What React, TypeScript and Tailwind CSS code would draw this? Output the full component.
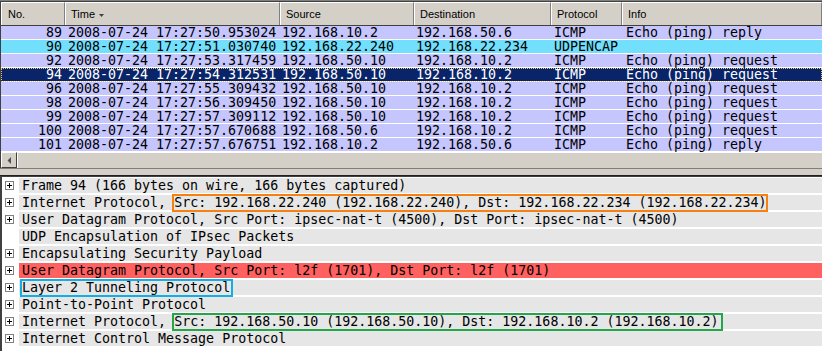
import React from "react";

type Kind = "icmp" | "udp" | "sel";
type Pkt = { no: string; time: string; src: string; dst: string; proto: string; info: string; kind: Kind };

const pkts: Pkt[] = [
  { no: "89", time: "2008-07-24 17:27:50.953024", src: "192.168.10.2", dst: "192.168.50.6", proto: "ICMP", info: "Echo (ping) reply", kind: "icmp" },
  { no: "90", time: "2008-07-24 17:27:51.030740", src: "192.168.22.240", dst: "192.168.22.234", proto: "UDPENCAP", info: "", kind: "udp" },
  { no: "92", time: "2008-07-24 17:27:53.317459", src: "192.168.50.10", dst: "192.168.10.2", proto: "ICMP", info: "Echo (ping) request", kind: "icmp" },
  { no: "94", time: "2008-07-24 17:27:54.312531", src: "192.168.50.10", dst: "192.168.10.2", proto: "ICMP", info: "Echo (ping) request", kind: "sel" },
  { no: "96", time: "2008-07-24 17:27:55.309432", src: "192.168.50.10", dst: "192.168.10.2", proto: "ICMP", info: "Echo (ping) request", kind: "icmp" },
  { no: "98", time: "2008-07-24 17:27:56.309450", src: "192.168.50.10", dst: "192.168.10.2", proto: "ICMP", info: "Echo (ping) request", kind: "icmp" },
  { no: "99", time: "2008-07-24 17:27:57.309112", src: "192.168.50.10", dst: "192.168.10.2", proto: "ICMP", info: "Echo (ping) request", kind: "icmp" },
  { no: "100", time: "2008-07-24 17:27:57.670688", src: "192.168.50.6", dst: "192.168.10.2", proto: "ICMP", info: "Echo (ping) request", kind: "icmp" },
  { no: "101", time: "2008-07-24 17:27:57.676751", src: "192.168.10.2", dst: "192.168.50.6", proto: "ICMP", info: "Echo (ping) reply", kind: "icmp" },
];

const rowCls: Record<Kind, string> = {
  icmp: "bg-[#c6c6ff] text-black",
  udp: "bg-[#72e0fc] text-black",
  sel: "bg-[#0a246a] text-white outline outline-1 outline-dotted outline-[#e8c878] -outline-offset-1",
};

const GRID = "grid grid-cols-[64px_215px_134px_137px_71px_1fr]";

function HeaderCell({ children }: { children: React.ReactNode }) {
  return (
    <div className="h-[23px] flex items-center border-t border-t-white border-l border-l-white border-r border-r-[#808080] pl-[5px] text-[11px] text-black font-['Liberation_Sans',Arial,sans-serif] whitespace-nowrap overflow-hidden">
      {children}
    </div>
  );
}

function Plus() {
  return (
    <div className="w-[9px] h-[9px] border border-[#808080] bg-white flex items-center justify-center">
      <svg width="7" height="7" viewBox="0 0 7 7">
        <rect x="1" y="3" width="5" height="1" fill="#000" />
        <rect x="3" y="1" width="1" height="5" fill="#000" />
      </svg>
    </div>
  );
}

function DetailRow({ plus = true, red = false, children }: { plus?: boolean; red?: boolean; children: React.ReactNode }) {
  return (
    <div className="h-[17px] flex items-start">
      <div className="w-[17px] h-[15px] pl-[3px] pt-[3px]">{plus && <Plus />}</div>
      <div className={`flex-1 h-[15px] leading-[15px] pl-[3px] whitespace-pre ${red ? "bg-[#ff6060]" : "bg-[#e6e6e6]"}`}>
        {children}
      </div>
    </div>
  );
}

function Box({ color, children, extra }: { color: string; children: React.ReactNode; extra: string }) {
  return (
    <span className={`inline-block h-[16px] align-top outline-2 outline-solid ${color} -outline-offset-1 ${extra}`}>
      {children}
    </span>
  );
}

export default function App() {
  return (
    <div className="w-[822px] h-[351px] bg-white overflow-hidden font-['DejaVu_Sans_Mono',monospace] text-[13.3px] text-black">
      {/* packet list */}
      <div className="border-t border-t-[#808080]">
        <div className="border-t border-t-[#404040] border-l border-l-[#404040]">
          <div className={`${GRID} bg-[#d4d0c8] border-b border-b-[#404040]`}>
            <HeaderCell><span className="pl-[1px]">No.</span></HeaderCell>
            <HeaderCell>
              <span>Time</span>
              <svg className="ml-[4px] mt-[3px]" width="5" height="3" viewBox="0 0 5 3">
                <path d="M0 0 H5 L2.5 3 Z" fill="#404040" />
              </svg>
            </HeaderCell>
            <HeaderCell>Source</HeaderCell>
            <HeaderCell>Destination</HeaderCell>
            <HeaderCell>Protocol</HeaderCell>
            <HeaderCell>Info</HeaderCell>
          </div>
          {pkts.map((p) => (
            <div key={p.no} className={`${GRID} h-[14px] border-b border-b-white leading-[13px] whitespace-pre ${rowCls[p.kind]}`}>
              <div className="text-right pr-[3px]">{p.no}</div>
              <div className="pl-[3px]">{p.time}</div>
              <div className="pl-[2px]">{p.src}</div>
              <div className="pl-[2px]">{p.dst}</div>
              <div className="pl-[3px]">{p.proto}</div>
              <div className="pl-[4px]">{p.info}</div>
            </div>
          ))}
          {/* horizontal scrollbar */}
          <div className="h-[16px] flex bg-[#d4d0c8]">
            <div className="w-[16px] h-[16px] border-t border-l border-t-white border-l-white border-r border-b border-r-[#404040] border-b-[#404040] flex items-center justify-center">
              <svg width="4" height="7" viewBox="0 0 4 7">
                <path d="M4 0 V7 L0.5 3.5 Z" fill="#505050" />
              </svg>
            </div>
            <div className="flex-1 h-[16px] border-t border-l border-t-white border-l-white bg-[#d4d0c8]" />
          </div>
        </div>
      </div>
      {/* splitter */}
      <div className="border-t border-t-[#808080] border-b border-b-[#202020] h-[8px] bg-[#d4d0c8]" />
      <div className="border-t border-t-[#404040]" />
      {/* details */}
      <div className="border-l-2 border-l-[#404040] pt-[1px] h-[174px]">
        <DetailRow>Frame 94 (166 bytes on wire, 166 bytes captured)</DetailRow>
        <DetailRow>
          Internet Protocol,{" "}
          <Box color="outline-[#f5820f]" extra="-ml-[1px] pl-[1px]">
            Src: 192.168.22.240 (192.168.22.240), Dst: 192.168.22.234 (192.168.22.234)
          </Box>
        </DetailRow>
        <DetailRow>User Datagram Protocol, Src Port: ipsec-nat-t (4500), Dst Port: ipsec-nat-t (4500)</DetailRow>
        <DetailRow plus={false}>UDP Encapsulation of IPsec Packets</DetailRow>
        <DetailRow>Encapsulating Security Payload</DetailRow>
        <DetailRow red>User Datagram Protocol, Src Port: l2f (1701), Dst Port: l2f (1701)</DetailRow>
        <DetailRow>
          <Box color="outline-[#12aee6]" extra="-ml-[1px] pl-[1px] pr-[2px]">Layer 2 Tunneling Protocol</Box>
        </DetailRow>
        <DetailRow>Point-to-Point Protocol</DetailRow>
        <DetailRow>
          Internet Protocol,{" "}
          <Box color="outline-[#22a84a]" extra="-ml-[1px] pl-[1px] pr-[3px]">
            Src: 192.168.50.10 (192.168.50.10), Dst: 192.168.10.2 (192.168.10.2)
          </Box>
        </DetailRow>
        <DetailRow>Internet Control Message Protocol</DetailRow>
      </div>
    </div>
  );
}
